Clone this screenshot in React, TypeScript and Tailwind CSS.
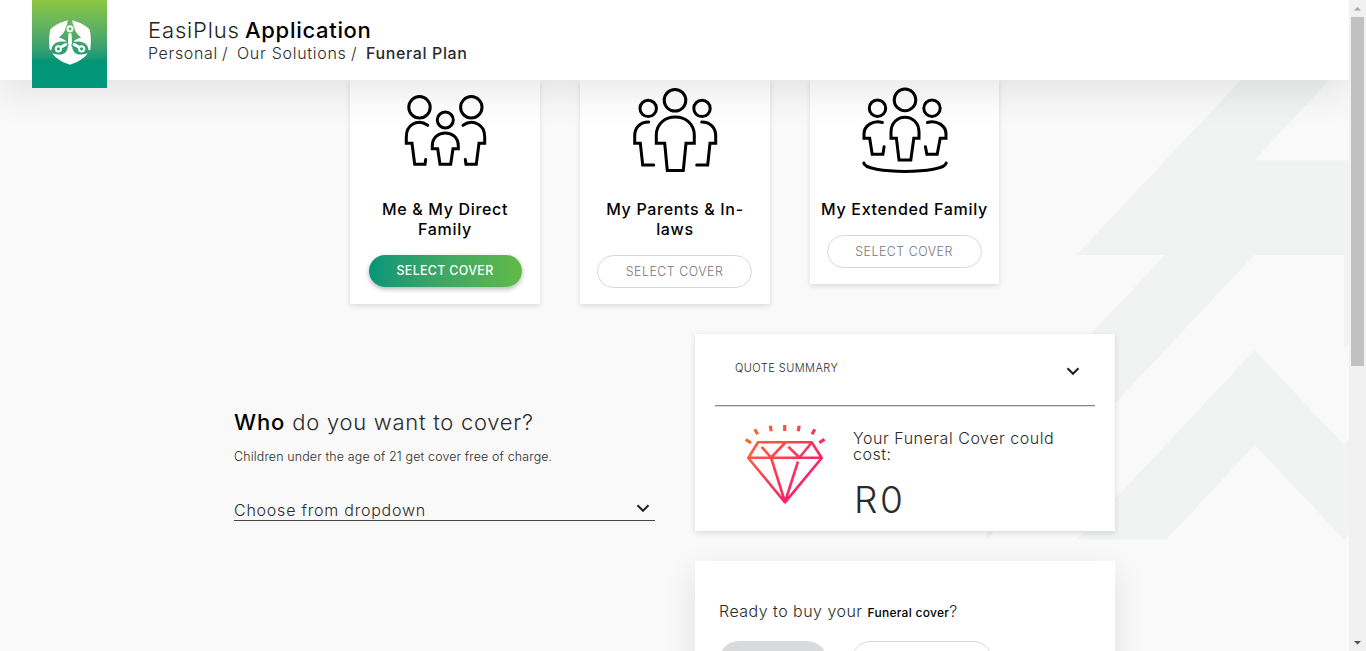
import type { ReactNode } from "react";

function BrandMark() {
  return (
    <svg className="block h-[88px] w-[75px]" viewBox="32 0 75 88">
      <g fill="#fff">
        <path d="M67.7 20.2C59.5 22.5 53 26 50.4 29.5C49 34 48.8 43.5 49.7 49.8L51.2 50.4C51.8 47 53.2 44.2 56 42.8C59.5 41 64 41 67.6 42.3C66 40.3 62 38.2 58.8 37.5C63.2 34.2 66.9 29 67.7 20.2Z" />
        <path d="M72.3 20.2C80.5 22.5 87 26 89.6 29.5C91 34 91.2 43.5 90.3 49.8L88.8 50.4C88.2 47 86.8 44.2 84 42.8C80.5 41 76 41 72.4 42.3C74 40.3 78 38.2 81.2 37.5C76.8 34.2 73.1 29 72.3 20.2Z" />
        <path d="M68.6 31H71.4L72.2 47C72.9 52.8 77 56.8 87.7 53.2C83.8 59 77 62.5 70 64.7C63 62.5 56.2 59 52.3 53.2C63 56.8 67.1 52.8 67.8 47Z" />
      </g>
      <path d="M67.7 43.2L60.5 47.5M72.3 43.2L79.5 47.5" stroke="#1a9f72" strokeWidth="5" />
      <g fill="none" stroke="#fff">
        <circle cx="70" cy="28.8" r="4" stroke="#5fb659" strokeWidth="1.2" />
        <circle cx="70" cy="28.8" r="2.5" strokeWidth="2" />
        <circle cx="58.4" cy="48.8" r="2.6" strokeWidth="2" />
        <circle cx="81.6" cy="48.8" r="2.6" strokeWidth="2" />
        <path d="M61 47.1L67 43.7M79 47.1L73 43.7" strokeWidth="3" />
      </g>
    </svg>
  );
}

function DirectFamilyIcon() {
  return (
    <svg className="h-[100px] w-[110px]" viewBox="0 0 110 100" fill="none" stroke="#000" strokeWidth="3" strokeLinecap="round" strokeLinejoin="miter">
      <circle cx="29.5" cy="27.3" r="10.7" />
      <circle cx="81.3" cy="27.3" r="10.7" />
      <circle cx="55.3" cy="40" r="8" />
      <path d="M37.7 45.3C33 42 27 41.7 22.5 44.3C18 47 16.3 51 16.3 57V63.3H22L24.7 84.3H35L35.7 79.5" />
      <path d="M73 45.3C77.7 42 83.7 41.7 88.2 44.3C93 47 94.7 51 94.7 57V63.3H89L86.3 84.3H76L75.3 79.5" />
      <path d="M42.3 68.7V66C42.3 48.6 68.3 48.6 68.3 66V68.7H63L60.7 84.3H50L47.7 68.7Z" />
    </svg>
  );
}

function ParentsIcon() {
  return (
    <svg className="h-[100px] w-[110px]" viewBox="0 0 110 100" fill="none" stroke="#000" strokeWidth="3" strokeLinecap="round">
      <circle cx="55" cy="20.3" r="10.8" />
      <circle cx="28.2" cy="28.4" r="8.2" />
      <circle cx="82" cy="28.4" r="8.2" />
      <path d="M28.7 42C20 42 14.7 47.7 14.7 56V63.2H20.3L22.7 84.9H33.7" />
      <path d="M81.7 42C90.3 42 95.7 47.7 95.7 56V63.2H90L87.7 84.9H76.7" />
      <path d="M36.3 63.3V55.3C36.3 31 74.3 31 74.3 55.3V63.3H66L63.3 90.4H47.3L44.7 63.3Z" />
    </svg>
  );
}

function ExtendedFamilyIcon() {
  return (
    <svg className="h-[100px] w-[110px]" viewBox="0 0 110 100" fill="none" stroke="#000" strokeWidth="3" strokeLinecap="round">
      <circle cx="55" cy="19.9" r="10.8" />
      <circle cx="27.5" cy="28.2" r="8.2" />
      <circle cx="82" cy="28.2" r="8.2" />
      <path d="M32.4 42.5C23 40 14 45.5 14 54V58.3H19.7L22.2 74.3H32.9L34.1 66.7" />
      <path d="M77.4 42.5C87 40 96 45.5 96 54V58.3H90.2L87.2 74.3H76.9L75.4 66.7" />
      <path d="M41 58.3V52.5C41 32 69 32 69 52.5V58.3H63.8L60.8 80H49L46.4 58.3Z" />
      <path d="M13.8 82.9C14 94.2 96 94.2 96.2 82.9" />
    </svg>
  );
}

function DiamondIcon() {
  return (
    <svg className="h-[100px] w-[100px]" viewBox="0 0 100 100" fill="none">
      <defs>
        <linearGradient id="gem" gradientUnits="userSpaceOnUse" x1="12" y1="20" x2="72" y2="70">
          <stop stopColor="#f96b2c" />
          <stop offset=".5" stopColor="#fb4350" />
          <stop offset="1" stopColor="#f51e6d" />
        </linearGradient>
      </defs>
      <g stroke="url(#gem)" strokeWidth="2.6" strokeLinejoin="round">
        <path d="M23 27.3H76.7L86.7 43L50 87.3L13.3 43ZM13.3 42.8H86.7M26.7 31.8L36 42.5L50.5 27.5M53.3 31.8L64.5 42.5L76.7 27.5M36 42.5L50 87L63 46.5" />
        <path d="M10.7 24.5L16 27.8M19.8 14.2L22.7 19.3M35.3 10.8L36.2 16.3M49.7 10V16M64.2 10.8L63.2 16.3M79.8 14.2L77 19.3M89.5 24.3L84.3 27.7" strokeWidth="3.2" />
      </g>
    </svg>
  );
}

function Chevron() {
  return (
    <svg className="h-3 w-4" viewBox="0 0 16 12" fill="none" stroke="#222" strokeWidth="2.1">
      <path d="M2.5 3.2L8 8.7L13.5 3.2" />
    </svg>
  );
}

function Backdrop() {
  return (
    <svg className="absolute top-0 left-0 h-[651px] w-[1349px]" viewBox="0 0 1349 651" fill="#f0f3f2">
      <path d="M1241 80L1076.3 255H1165.3L987 443V539.5L1254.3 255H1343.8V349L1349 344V160.5H1254L1329.5 80Z" />
      <path d="M1254.7 350L1344 445L1349 439.5V534L1344 539.5L1254.7 445L1166.5 539.5H1077Z" />
    </svg>
  );
}

type CoverProps = { icon: ReactNode; title: ReactNode; selected?: boolean };

function CoverCard({ icon, title, selected }: CoverProps) {
  return (
    <section className="flex w-[190px] flex-col items-center bg-white pb-4 shadow-[0_2px_5px_rgba(0,0,0,0.12)] last:w-[189px]">
      <div className="flex h-[119px] justify-center">{icon}</div>
      <h2 className="mb-px text-center text-[16px] leading-5 font-medium tracking-[0.68px] whitespace-nowrap text-black">{title}</h2>
      {selected ? (
        <button className="mt-[15px] mb-px h-8 w-[153px] rounded-full bg-linear-to-r from-[#009677] to-[#61b946] pt-px text-[12.4px] font-medium tracking-[0.35px] text-white shadow-[0_2px_5px_rgba(0,0,0,0.3)]">
          SELECT COVER
        </button>
      ) : (
        <button className="mt-[15px] mr-px h-[33px] w-[155px] rounded-full border border-[#d8d8d8] pt-px text-[12.4px] font-light tracking-[0.5px] text-[#777]">
          SELECT COVER
        </button>
      )}
    </section>
  );
}

export default function App() {
  return (
    <div className="flex h-[651px] w-[1366px] overflow-hidden bg-[#f9f9f9] font-['Inter',sans-serif] text-[#2b2b2b]">
      <div className="relative flex w-[1349px] flex-col overflow-hidden">
        <Backdrop />
        <header className="relative z-10 flex h-20 shrink-0 bg-white pl-8 shadow-[0_10px_40px_rgba(0,0,0,0.1)]">
          <div className="h-[88px] w-[75px] bg-linear-to-b from-[#8dc73f] to-[#009677] to-70%">
            <BrandMark />
          </div>
          <div className="pt-[18px] pl-[41px] whitespace-nowrap">
            <h1 className="flex text-[22px] leading-6 font-light text-black">
              <span className="w-[97px] tracking-[0.85px] text-[#222]">EasiPlus </span>
              <b className="font-medium tracking-[0.7px]">Application</b>
            </h1>
            <nav className="flex text-[16px] leading-[22px] font-light">
              <span className="w-[74px] tracking-[0.65px]">Personal</span>
              <span className="w-[15px]">/</span>
              <span className="w-[114px] tracking-[0.72px]">Our Solutions</span>
              <span className="w-[15px]">/</span>
              <b className="font-medium tracking-[0.62px]">Funeral Plan</b>
            </nav>
          </div>
        </header>
        <main className="relative flex flex-col">
          <div className="flex items-start gap-10 pl-[350px]">
            <CoverCard icon={<DirectFamilyIcon />} title={<>Me &amp; My Direct<br />Family</>} selected />
            <CoverCard icon={<ParentsIcon />} title={<>My Parents &amp; In-<br />laws</>} />
            <CoverCard icon={<ExtendedFamilyIcon />} title="My Extended Family" />
          </div>
          <div className="mt-[30px] flex gap-10 pl-[234px]">
            <section className="w-[421px] pt-[74px] font-light">
              <h2 className="text-[22px] leading-7 tracking-[0.73px]">
                <b className="font-medium tracking-[0.9px] text-black">Who</b> do you want to cover?
              </h2>
              <p className="mt-[11px] text-[12.4px] leading-5 tracking-[0.17px]">Children under the age of 21 get cover free of charge.</p>
              <div className="mt-[33px] flex h-[21px] items-center justify-between border-b border-[#444] pr-1">
                <span className="text-[16px] tracking-[0.77px]">Choose from dropdown</span>
                <span className="-mt-1"><Chevron /></span>
              </div>
            </section>
            <div className="flex w-[420px] flex-col gap-[30px] font-light">
              <section className="h-[197px] bg-white px-5 shadow-[0_2px_6px_rgba(0,0,0,0.13)]">
                <div className="flex h-[72px] items-start justify-between border-b border-[#888] pt-[26px] pr-[14px] pl-5 shadow-[0_1px_0_#ddd]">
                  <span className="text-[11px] leading-4 tracking-[0.45px]">QUOTE SUMMARY</span>
                  <span className="mt-[5px]"><Chevron /></span>
                </div>
                <div className="flex gap-[18px] pt-[9px] pl-5">
                  <DiamondIcon />
                  <div className="pt-[15px]">
                    <p className="text-[16px] leading-4 tracking-[0.53px]">Your Funeral Cover could<br />cost:</p>
                    <p className="mt-[14px] pl-px text-[37px] leading-[48px] tracking-[2.5px]">R0</p>
                  </div>
                </div>
              </section>
              <section className="h-[140px] bg-white pt-10 pl-6 shadow-[0_10px_30px_rgba(0,0,0,0.1)]">
                <p className="text-[16px] leading-5 tracking-[0.47px]">
                  Ready to buy your <b className="text-[12px] font-medium tracking-[0.27px] text-black">Funeral cover</b>?
                </p>
                <div className="mt-[19px] flex gap-6">
                  <div className="-mt-px h-10 w-[108px] rounded-full bg-[#d9dadc]" />
                  <div className="-mt-px h-10 w-[142px] rounded-full border border-[#d8d8d8]" />
                </div>
              </section>
            </div>
          </div>
        </main>
      </div>
      <div className="flex w-[17px] shrink-0 flex-col items-center justify-between bg-[#f1f1f1]">
        <svg className="h-[17px] w-[17px]" viewBox="0 0 17 17"><path d="M5 10.5H12L8.5 7Z" fill="#a3a3a3" /></svg>
        <div className="mb-auto h-[349px] w-[13px] bg-[#c1c1c1]" />
        <svg className="h-[17px] w-[17px]" viewBox="0 0 17 17"><path d="M5 7H12L8.5 10.5Z" fill="#505050" /></svg>
      </div>
    </div>
  );
}
